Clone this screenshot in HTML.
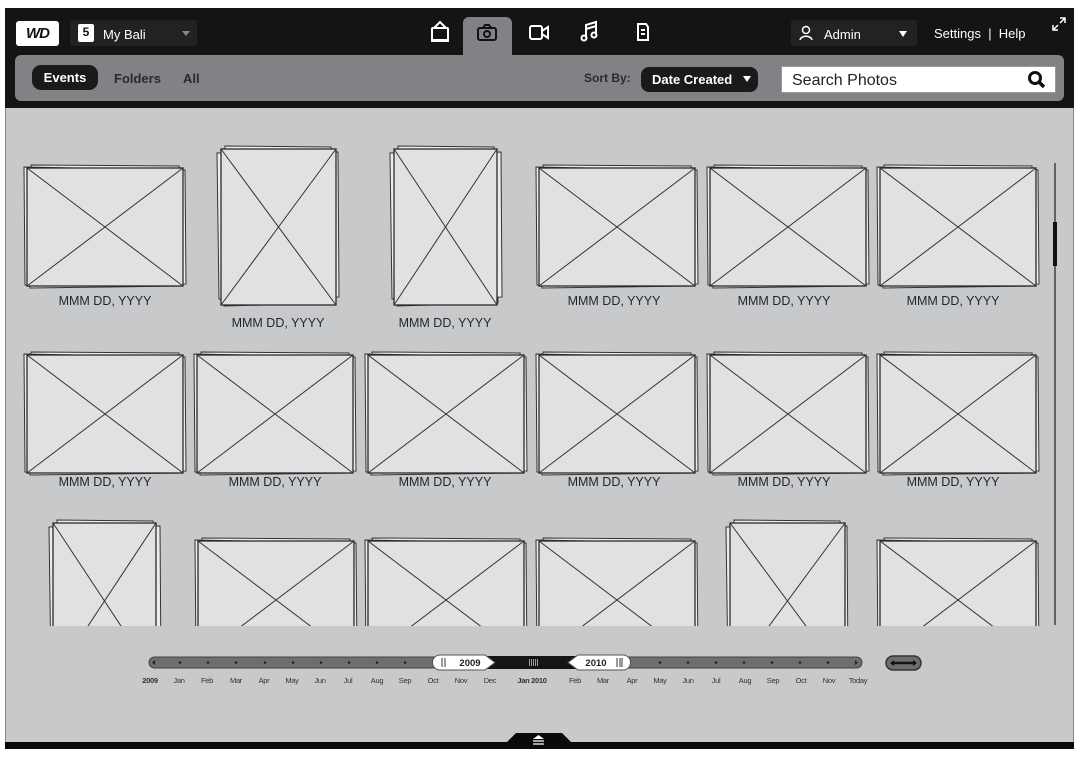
<!DOCTYPE html>
<html><head><meta charset="utf-8"><style>
*{margin:0;padding:0;box-sizing:border-box}
body{width:1086px;height:766px;background:#fff;font-family:"Liberation Sans",sans-serif;position:relative;overflow:hidden}
.abs{position:absolute}
#frame{left:5px;top:8px;width:1069px;height:740px;background:#c8c9cb;border:1px solid #888}
#hdr{left:5px;top:8px;width:1069px;height:100px;background:#141414}
.t{color:#fff;font-size:13px}
</style></head><body>
<div id="frame" class="abs"></div>
<div id="hdr" class="abs"></div>
<div class="abs" style="left:16px;top:21px;width:43px;height:25px;background:#fff;border-radius:3px;color:#111;font:italic bold 15px 'Liberation Sans',sans-serif;text-align:center;line-height:25px;letter-spacing:-1px">WD</div>
<div class="abs" style="left:70px;top:20px;width:127px;height:26px;background:#222;border-radius:3px"></div>
<div class="abs" style="left:78px;top:24px;width:16px;height:18px;background:#fff;border-radius:2px;color:#111;font:bold 12px 'Liberation Sans';text-align:center;line-height:16px;border-bottom:2px solid #fff">5</div>
<div class="abs t" style="left:103px;top:27px">My Bali</div>
<div class="abs" style="left:182px;top:31px;border:4px solid transparent;border-top:5px solid #888"></div>
<div class="abs" style="left:463px;top:17px;width:49px;height:40px;background:#818285;border-radius:6px 6px 0 0"></div>
<svg class="abs" style="left:420px;top:14px" width="240" height="40" viewBox="0 0 240 40" fill="none" stroke-width="2">
<g stroke="#fff"><rect x="12" y="14" width="16" height="12" rx="1"/><path d="M14 14 L20 8 L26 14"/><path d="M11 27h18"/></g>
<g stroke="#111"><rect x="58" y="14" width="18" height="12" rx="2"/><path d="M63 14l2-3h4l2 3"/><circle cx="67" cy="20" r="3"/></g>
<g stroke="#fff"><rect x="110" y="12" width="12" height="13" rx="2"/><path d="M122 17l6-4v11l-6-4"/></g>
<g stroke="#fff"><path d="M166 24V11l10-3v13"/><circle cx="164" cy="24" r="2.5"/><circle cx="174" cy="21" r="2.5"/><path d="M166 15l10-3"/></g>
<g stroke="#fff"><path d="M218 10h8l2 3v13h-10z"/><path d="M221 16h4M221 20h4"/></g>
</svg>
<div class="abs" style="left:791px;top:20px;width:126px;height:26px;background:#222;border-radius:3px"></div>
<svg class="abs" style="left:799px;top:25px" width="14" height="16"><circle cx="7" cy="5" r="3.5" stroke="#fff" stroke-width="1.5" fill="none"/><path d="M1 15c1-5 11-5 12 0" stroke="#fff" stroke-width="1.5" fill="none"/></svg>
<div class="abs t" style="left:824px;top:27px">Admin</div>
<div class="abs" style="left:899px;top:31px;border:4px solid transparent;border-top:6px solid #fff"></div>
<div class="abs t" style="left:934px;top:26px">Settings &nbsp;| &nbsp;Help</div>
<svg class="abs" style="left:1051px;top:16px" width="16" height="16" stroke="#fff" stroke-width="1.5" fill="none"><path d="M2 14l5-5M2 9v5h5M14 2l-5 5M9 2h5v5"/></svg>
<div class="abs" style="left:15px;top:55px;width:1049px;height:46px;background:#818285;border-radius:6px"></div>
<div class="abs" style="left:32px;top:65px;width:66px;height:25px;background:#1a1a1a;border-radius:9px;color:#fff;font:bold 13px 'Liberation Sans';text-align:center;line-height:25px">Events</div>
<div class="abs" style="left:114px;top:71px;font:bold 13px 'Liberation Sans';color:#2a2a2a">Folders</div>
<div class="abs" style="left:183px;top:71px;font:bold 13px 'Liberation Sans';color:#2a2a2a">All</div>
<div class="abs" style="left:584px;top:71px;font:bold 12px 'Liberation Sans';color:#2a2a2a">Sort By:</div>
<div class="abs" style="left:641px;top:67px;width:117px;height:25px;background:#1a1a1a;border-radius:8px;color:#fff;font:bold 13px 'Liberation Sans';line-height:25px;padding-left:11px">Date Created</div>
<div class="abs" style="left:743px;top:76px;border:4px solid transparent;border-top:6px solid #fff"></div>
<div class="abs" style="left:781px;top:66px;width:275px;height:27px;background:#fff;border:1px solid #999;font:16px 'Liberation Sans';color:#222;line-height:27px;padding-left:10px">Search Photos</div>
<svg class="abs" style="left:1027px;top:70px" width="20" height="20"><circle cx="8" cy="8" r="5.5" stroke="#111" stroke-width="3" fill="none"/><path d="M12 12l5 5" stroke="#111" stroke-width="3.5"/></svg>

<svg class="abs" style="left:0;top:0" width="1086" height="766" font-family="Liberation Sans" font-size="12.5">
<defs>
<clipPath id="c"><rect x="10" y="110" width="1040" height="516"/></clipPath>
<g id="L"><g stroke="#333" stroke-width="1" fill="#ececec">
<polygon points="4,-3 152,-2 155,118 3,120"/><polygon points="-3,-1 158,2 159,116 -2,117"/></g>
<rect x="0" y="0" width="156" height="118" fill="#e0e1e3" stroke="#2a2a2a" stroke-width="1.3"/>
<path d="M0 0L156 118M156 0L0 118" stroke="#333" stroke-width="1"/></g>
<g id="P"><g stroke="#333" stroke-width="1" fill="#ececec">
<polygon points="4,-3 110,-2 114,154 3,157"/><polygon points="-4,4 117,3 118,148 -2,150"/></g>
<rect x="0" y="0" width="115" height="156" fill="#e0e1e3" stroke="#2a2a2a" stroke-width="1.3"/>
<path d="M0 0L115 156M115 0L0 156" stroke="#333" stroke-width="1"/></g>
<g id="P2"><g stroke="#333" stroke-width="1" fill="#ececec">
<polygon points="4,-3 100,-2 104,154 3,157"/><polygon points="-4,4 107,3 108,148 -2,150"/></g>
<rect x="0" y="0" width="103" height="156" fill="#e0e1e3" stroke="#2a2a2a" stroke-width="1.3"/>
<path d="M0 0L103 156M103 0L0 156" stroke="#333" stroke-width="1"/></g>
</defs>
<g clip-path="url(#c)">
<use href="#L" x="27" y="168"/><use href="#P" x="221" y="149"/><use href="#P2" x="394" y="149"/>
<use href="#L" x="539" y="168"/><use href="#L" x="710" y="168"/><use href="#L" x="880" y="168"/>
<use href="#L" x="27" y="355"/><use href="#L" x="197" y="355"/><use href="#L" x="368" y="355"/>
<use href="#L" x="539" y="355"/><use href="#L" x="710" y="355"/><use href="#L" x="880" y="355"/>
<use href="#P2" x="53" y="523"/><use href="#L" x="198" y="541"/><use href="#L" x="368" y="541"/>
<use href="#L" x="539" y="541"/><use href="#P" x="730" y="523"/><use href="#L" x="880" y="541"/>
</g>
<g fill="#1e2530" text-anchor="middle">
<text x="105" y="305">MMM DD, YYYY</text><text x="278" y="327">MMM DD, YYYY</text><text x="445" y="327">MMM DD, YYYY</text>
<text x="614" y="305">MMM DD, YYYY</text><text x="784" y="305">MMM DD, YYYY</text><text x="953" y="305">MMM DD, YYYY</text>
<text x="105" y="486">MMM DD, YYYY</text><text x="275" y="486">MMM DD, YYYY</text><text x="445" y="486">MMM DD, YYYY</text>
<text x="614" y="486">MMM DD, YYYY</text><text x="784" y="486">MMM DD, YYYY</text><text x="953" y="486">MMM DD, YYYY</text>
</g>
<path d="M1055 163V625" stroke="#222" stroke-width="1.2"/>
<rect x="1053" y="222" width="4" height="44" fill="#111"/>

<rect x="149" y="657" width="713" height="11" rx="5.5" fill="#6d6e70" stroke="#444"/>
<g fill="#222">
<circle cx="180" cy="662.5" r="1.3"/><circle cx="208" cy="662.5" r="1.3"/><circle cx="236" cy="662.5" r="1.3"/><circle cx="265" cy="662.5" r="1.3"/><circle cx="293" cy="662.5" r="1.3"/><circle cx="321" cy="662.5" r="1.3"/><circle cx="349" cy="662.5" r="1.3"/><circle cx="377" cy="662.5" r="1.3"/><circle cx="405" cy="662.5" r="1.3"/>
<circle cx="660" cy="662.5" r="1.3"/><circle cx="688" cy="662.5" r="1.3"/><circle cx="716" cy="662.5" r="1.3"/><circle cx="744" cy="662.5" r="1.3"/><circle cx="772" cy="662.5" r="1.3"/><circle cx="800" cy="662.5" r="1.3"/><circle cx="828" cy="662.5" r="1.3"/>
<path d="M152 662.5l3-2.5v5z"/><path d="M858 662.5l-3-2.5v5z"/></g>
<rect x="460" y="656" width="140" height="13" fill="#151515"/>
<path d="M440 655h45l10 7.5l-10 7.5h-45a7.5 7.5 0 0 1 0-15z" fill="#fff" stroke="#555"/>
<path d="M623 655h-45l-10 7.5l10 7.5h45a7.5 7.5 0 0 0 0-15z" fill="#fff" stroke="#555"/>
<path d="M442 658v9M445 658v9M617 658v9M620 658v9M622 658v9" stroke="#333" stroke-width="1"/>
<path d="M529.5 659v7M531.5 659v7M533.5 659v7M535.5 659v7M537.5 659v7" stroke="#bbb" stroke-width="0.8"/>
<g font-weight="bold" font-size="9.5" fill="#222" text-anchor="middle"><text x="470" y="666">2009</text><text x="596" y="666">2010</text></g>
<rect x="886" y="656" width="35" height="14" rx="7" fill="#6d6e70" stroke="#333" stroke-width="1.5"/>
<path d="M892 663h23" stroke="#111" stroke-width="2.5"/><path d="M890 663l4-3v6zM917 663l-4-3v6z" fill="#111"/>
<g font-size="7.5" fill="#333" text-anchor="middle" letter-spacing="-0.3">
<text x="150" y="683" font-weight="bold">2009</text><text x="179" y="683">Jan</text><text x="207" y="683">Feb</text><text x="236" y="683">Mar</text><text x="264" y="683">Apr</text><text x="292" y="683">May</text><text x="320" y="683">Jun</text><text x="348" y="683">Jul</text><text x="377" y="683">Aug</text><text x="405" y="683">Sep</text><text x="433" y="683">Oct</text><text x="461" y="683">Nov</text><text x="490" y="683">Dec</text><text x="532" y="683" font-weight="bold">Jan 2010</text><text x="575" y="683">Feb</text><text x="603" y="683">Mar</text><text x="632" y="683">Apr</text><text x="660" y="683">May</text><text x="688" y="683">Jun</text><text x="716" y="683">Jul</text><text x="745" y="683">Aug</text><text x="773" y="683">Sep</text><text x="801" y="683">Oct</text><text x="829" y="683">Nov</text><text x="858" y="683">Today</text></g>
<rect x="5" y="742" width="1069" height="7" fill="#0a0a0a"/>
<path d="M506 743l10-10h46l10 10z" fill="#0a0a0a"/>
<path d="M533 741h11M533 744h11" stroke="#fff" stroke-width="1.2"/><path d="M533 739l5.5-4l5.5 4z" fill="#fff"/>
</svg>
</body></html>
